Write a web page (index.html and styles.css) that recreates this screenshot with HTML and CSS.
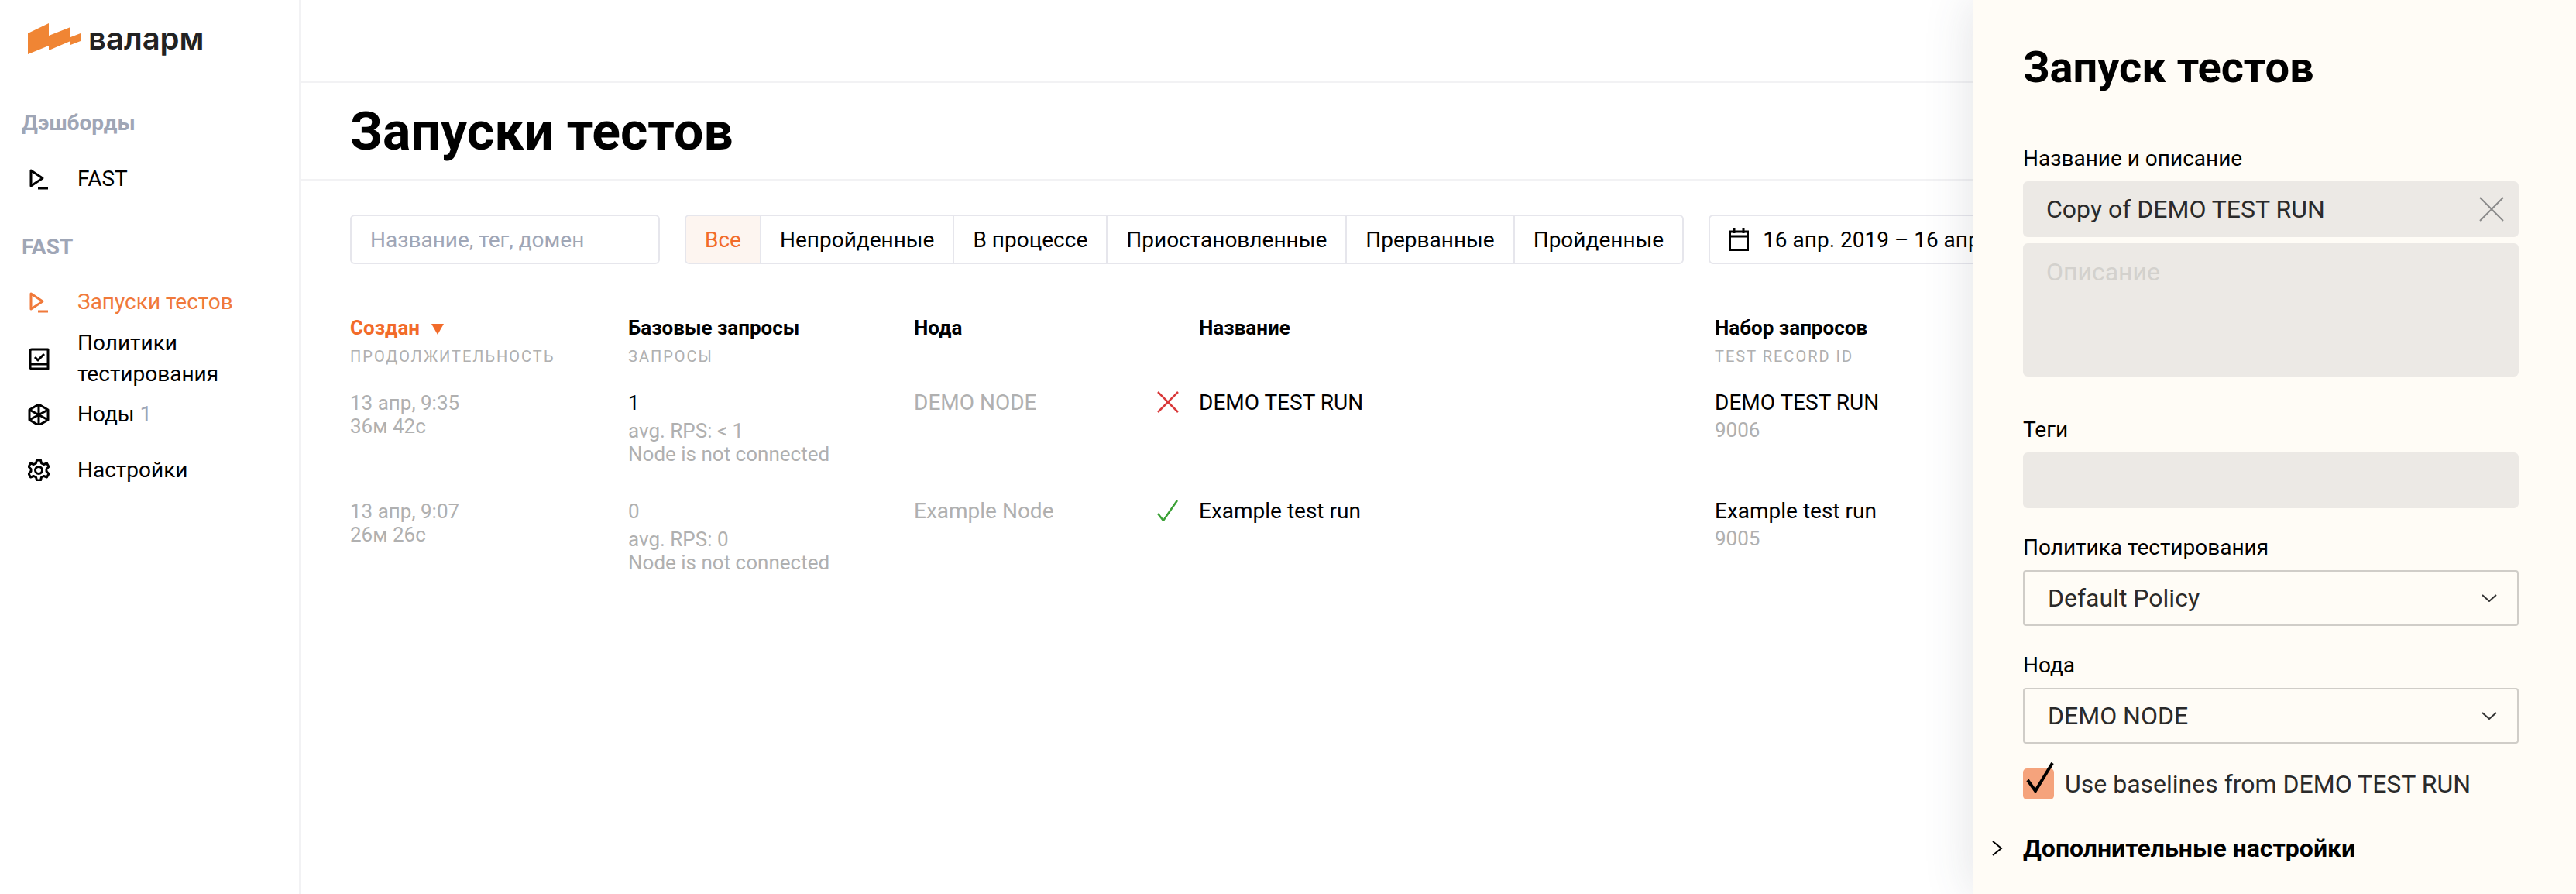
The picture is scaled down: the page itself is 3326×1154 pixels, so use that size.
FILE: index.html
```html
<!DOCTYPE html>
<html lang="ru">
    <head>
        <title>Запуски тестов</title>
        <link rel="stylesheet" href="styles.css">
    </head>
    <body>
        <aside class="sidebar">
            <div class="logo">
                <svg class="logo-mark" viewBox="0 0 68 40"><path d="M0 13 L27 0 V16 L55 5 V18 L68 13 V23 L55 28 V23 L27 35 V29 L0 40 Z"/></svg>
                <span class="logo-text">валарм</span>
            </div>
            <h4 class="nav-title">Дэшборды</h4>
            <a class="nav-item">
                <svg class="nav-icon" viewBox="0 0 28 28"><path d="M4 3 L19 13 L4 23 Z M13 26 H26"/></svg>
                <span>FAST</span>
            </a>
            <h4 class="nav-title nav-title-second">FAST</h4>
            <a class="nav-item nav-active">
                <svg class="nav-icon" viewBox="0 0 28 28"><path d="M4 3 L19 13 L4 23 Z M13 26 H26"/></svg>
                <span>Запуски тестов</span>
            </a>
            <a class="nav-item nav-double">
                <svg class="nav-icon" viewBox="0 0 28 28"><path d="M3 21 V4 Q3 2 5 2 H26 V27 H5 Q3 27 3 25 Z M3 21 H26 M9 12 L13 16 L21 8"/></svg>
                <span>Политики тестирования</span>
            </a>
            <a class="nav-item nav-nodes">
                <svg class="nav-icon" viewBox="0 0 28 28"><path d="M14 1 L26 8 V21 L14 28 L2 21 V8 Z M14 1 V28 M2 8 L26 21 M26 8 L2 21"/></svg>
                <span>Ноды <em class="nav-count">1</em></span>
            </a>
            <a class="nav-item nav-settings">
                <svg class="nav-icon" viewBox="0 0 28 28"><circle cx="14" cy="14" r="4.500"/><path d="M11.500 1 H16.500 L17.500 5 L20.500 6.500 L24.500 5 L27 9.500 L24 12.500 V15.500 L27 18.500 L24.500 23 L20.500 21.500 L17.500 23 L16.500 27 H11.500 L10.500 23 L7.500 21.500 L3.500 23 L1 18.500 L4 15.500 V12.500 L1 9.500 L3.500 5 L7.500 6.500 L10.500 5 Z"/></svg>
                <span>Настройки</span>
            </a>
        </aside>

        <main class="content">
            <div class="topbar"></div>
            <div class="page-head">
                <h1>Запуски тестов</h1>
            </div>
            <div class="filters">
                <div class="search">Название, тег, домен</div>
                <div class="tabs">
                    <span class="tab tab-active">Все</span>
                    <span class="tab">Непройденные</span>
                    <span class="tab">В процессе</span>
                    <span class="tab">Приостановленные</span>
                    <span class="tab">Прерванные</span>
                    <span class="tab">Пройденные</span>
                </div>
                <div class="dates">
                    <svg class="date-icon" viewBox="0 0 26 30"><path d="M1.500 5 H24.500 V28.500 H1.500 Z M1.500 11 H24.500 M7 0 V7 M19 0 V7"/></svg>
                    <span>16 апр. 2019 – 16 апр. 2019</span>
                </div>
            </div>

            <div class="row row-head">
                <div><div class="th th-sorted">Создан <i class="sort-arrow"></i></div><div class="th-sub">Продолжительность</div></div>
                <div><div class="th">Базовые запросы</div><div class="th-sub">Запросы</div></div>
                <div class="th">Нода</div>
                <div></div>
                <div class="th">Название</div>
                <div><div class="th">Набор запросов</div><div class="th-sub">Test record ID</div></div>
            </div>

            <div class="row">
                <div class="muted">13 апр, 9:35<br>36м 42с</div>
                <div><div class="count">1</div><div class="muted">avg. RPS: &lt; 1<br>Node is not connected</div></div>
                <div class="muted node">DEMO NODE</div>
                <svg class="status status-fail" viewBox="0 0 28 28"><path d="M1 1 L27 27 M27 1 L1 27"/></svg>
                <div class="name">DEMO TEST RUN</div>
                <div><div class="name">DEMO TEST RUN</div><div class="muted set-id">9006</div></div>
            </div>
            <div class="row">
                <div class="muted">13 апр, 9:07<br>26м 26с</div>
                <div><div class="count count-zero">0</div><div class="muted">avg. RPS: 0<br>Node is not connected</div></div>
                <div class="muted node">Example Node</div>
                <svg class="status status-pass" viewBox="0 0 28 28"><path d="M1 18 L8 27 L26 1"/></svg>
                <div class="name">Example test run</div>
                <div><div class="name">Example test run</div><div class="muted set-id">9005</div></div>
            </div>
        </main>

        <section class="panel">
            <h2>Запуск тестов</h2>
            <div class="label label-first">Название и описание</div>
            <div class="input input-name">
                <span>Copy of DEMO TEST RUN</span>
                <svg class="clear" viewBox="0 0 32 32"><path d="M1 1 L31 31 M31 1 L1 31"/></svg>
            </div>
            <div class="input input-desc">Описание</div>
            <div class="label label-tags">Теги</div>
            <div class="input input-tags"></div>
            <div class="label">Политика тестирования</div>
            <div class="select">
                <span>Default Policy</span>
                <svg class="chevron" viewBox="0 0 20 10"><path d="M1 1 L10 9 L19 1"/></svg>
            </div>
            <div class="label">Нода</div>
            <div class="select">
                <span>DEMO NODE</span>
                <svg class="chevron" viewBox="0 0 20 10"><path d="M1 1 L10 9 L19 1"/></svg>
            </div>
            <div class="check-row">
                <div class="checkbox">
                    <svg class="check-mark" viewBox="0 0 36 40"><path d="M2 24 L12 38 L34 2"/></svg>
                </div>
                <span>Use baselines from DEMO TEST RUN</span>
            </div>
            <div class="advanced">
                <svg class="adv-arrow" viewBox="0 0 14 20"><path d="M1 1 L12 10 L1 19"/></svg>
                Дополнительные настройки
            </div>
        </section>
    </body>
</html>
```

FILE: styles.css
```css
:root {
    --orange: #f26b2a;
    --nav-orange: #f0793a;
    --line: #f2f2f4;
    --box-line: #e6e6ec;
    --muted: #b0b0b0;
    --label-grey: #9fa6b6;
    --panel-bg: #fffcf6;
    --field-bg: #ece9e5;
    --text: #000;
}

html, body {
    height: 100%;
}

body {
    margin: 0;
    display: flex;
    height: 1154px;
    overflow: hidden;
    position: relative;
    background: white;
    color: var(--text);
    font-family: Roboto, "Liberation Sans", sans-serif;
    font-size: 28px;
}

/* sidebar */

.sidebar {
    width: 358px;
    flex: none;
    border-right: 2px solid var(--line);
    padding-left: 28px;
}

.logo {
    display: flex;
    align-items: center;
    gap: 10px;
    height: 40px;
    margin: 30px 0 0 8px;
}

.logo-mark {
    width: 68px;
    height: 40px;
    fill: #f08534;
}

.logo-text {
    font-family: Inter, sans-serif;
    font-weight: 600;
    font-size: 40px;
    color: #222;
    line-height: 40px;
}

.nav-title {
    margin: 69px 0 0;
    font-size: 28px;
    line-height: 40px;
    font-weight: 700;
    color: var(--label-grey);
}

.nav-title-second {
    margin-top: 48px;
}

.nav-item {
    display: flex;
    align-items: center;
    gap: 36px;
    font-size: 28px;
    line-height: 40px;
    margin-top: 32px;
}

.nav-title-second + .nav-item {
    margin-top: 31px;
}

.nav-item span {
    width: 250px;
}

.nav-double {
    margin-top: 13px;
}

.nav-nodes {
    margin-top: 12px;
}

.nav-settings {
    margin-top: 32px;
}

.nav-icon {
    width: 28px;
    height: 28px;
    margin-left: 8px;
    flex: none;
    fill: none;
    stroke: black;
    stroke-width: 3;
    stroke-linejoin: round;
}

.nav-active {
    color: var(--nav-orange);
}

.nav-active .nav-icon {
    stroke: var(--nav-orange);
}

.nav-count {
    font-style: normal;
    color: var(--label-grey);
}

/* content */

.content {
    flex: 1;
    min-width: 0;
}

.topbar {
    height: 105px;
    border-bottom: 2px solid var(--line);
}

.page-head {
    height: 122px;
    padding-top: 2px;
    display: flex;
    align-items: center;
    padding-left: 64px;
    border-bottom: 2px solid var(--line);
}

h1 {
    margin: 0;
    font-size: 68px;
    font-weight: 700;
}

.filters {
    display: flex;
    gap: 32px;
    padding: 44px 0 0 64px;
    white-space: nowrap;
}

.search,
.tabs,
.dates {
    height: 64px;
    box-sizing: border-box;
    border: 2px solid var(--box-line);
    border-radius: 6px;
    display: flex;
    align-items: center;
}

.search {
    width: 400px;
    padding-left: 24px;
    color: var(--label-grey);
}

.tabs {
    align-items: stretch;
    overflow: hidden;
}

.tab {
    display: flex;
    align-items: center;
    padding: 0 24px;
    border-left: 2px solid var(--box-line);
}

.tab:first-child {
    border-left: 0;
}

.tab-active {
    background: #fdf5f0;
    color: var(--orange);
}

.dates {
    padding-left: 24px;
    gap: 18px;
    width: 700px;
    flex: none;
}

.date-icon {
    width: 26px;
    height: 30px;
    fill: none;
    stroke: black;
    stroke-width: 3;
}

.row {
    display: grid;
    grid-template-columns: 359px 369px 314px 54px 666px 1fr;
    height: 140px;
    padding-left: 64px;
    font-size: 26px;
    line-height: 30px;
}

.row-head {
    height: 67px;
    margin: 64px 0 33px;
    line-height: 36px;
}

.th {
    font-weight: 700;
}

.th-sorted {
    color: var(--orange);
}

.sort-arrow {
    display: inline-block;
    margin-left: 8px;
    border-left: 8px solid transparent;
    border-right: 8px solid transparent;
    border-top: 14px solid var(--orange);
}

.th-sub {
    margin-top: 7px;
    font-size: 20px;
    line-height: 24px;
    letter-spacing: 2px;
    color: var(--muted);
    text-transform: uppercase;
}

.muted {
    color: var(--muted);
}

.node,
.name {
    font-size: 28px;
}

.set-id {
    margin-top: 5px;
}

.count {
    margin-bottom: 6px;
}

.count-zero {
    color: var(--muted);
}

.status {
    width: 28px;
    height: 28px;
    fill: none;
    stroke-width: 2.500;
}

.status-fail {
    stroke: #d9393a;
}

.status-pass {
    stroke: #3aa035;
}

/* right panel, lies over the table */

.panel {
    position: absolute;
    top: 0;
    right: 0;
    bottom: 0;
    width: 778px;
    box-sizing: border-box;
    padding: 0 74px 0 64px;
    background: var(--panel-bg);
    box-shadow: 0 0 60px rgba(60, 70, 90, 0.16);
}

h2 {
    margin: 0;
    padding-top: 51px;
    font-size: 56px;
    line-height: 72px;
    font-weight: 700;
}

.label {
    margin: 33px 0 11px;
    line-height: 36px;
}

.label-first {
    margin-top: 64px;
}

.label-tags {
    margin-top: 51px;
}

.input {
    background: var(--field-bg);
    border-radius: 6px;
    box-sizing: border-box;
    padding: 0 30px;
    font-size: 32px;
}

.input-name {
    height: 72px;
    display: flex;
    align-items: center;
    justify-content: space-between;
    padding-right: 19px;
    color: #2a2a2a;
}

.clear {
    width: 32px;
    height: 32px;
    fill: none;
    stroke: #8a8a8a;
    stroke-width: 2;
}

.input-desc {
    height: 172px;
    margin-top: 8px;
    padding-top: 18px;
    color: #d3d1cd;
}

.input-tags {
    height: 72px;
}

.select {
    height: 72px;
    box-sizing: border-box;
    border: 2px solid #d0cdc8;
    border-radius: 4px;
    display: flex;
    align-items: center;
    justify-content: space-between;
    padding: 0 26px 0 30px;
    font-size: 32px;
    color: #2a2a2a;
}

.chevron {
    width: 20px;
    height: 10px;
    fill: none;
    stroke: #333;
    stroke-width: 2;
}

.check-row {
    display: flex;
    align-items: center;
    gap: 14px;
    margin-top: 32px;
    font-size: 32px;
    color: #2a2a2a;
}

.checkbox {
    width: 40px;
    height: 40px;
    border-radius: 5px;
    background: #f5a37c;
    position: relative;
}

.check-mark {
    position: absolute;
    left: 4px;
    top: -9px;
    width: 36px;
    height: 40px;
    fill: none;
    stroke: black;
    stroke-width: 4;
}

.advanced {
    position: relative;
    margin-top: 45px;
    font-size: 32px;
    font-weight: 700;
    line-height: 36px;
}

.adv-arrow {
    position: absolute;
    left: -40px;
    top: 8px;
    width: 14px;
    height: 20px;
    fill: none;
    stroke: black;
    stroke-width: 2;
}
```
